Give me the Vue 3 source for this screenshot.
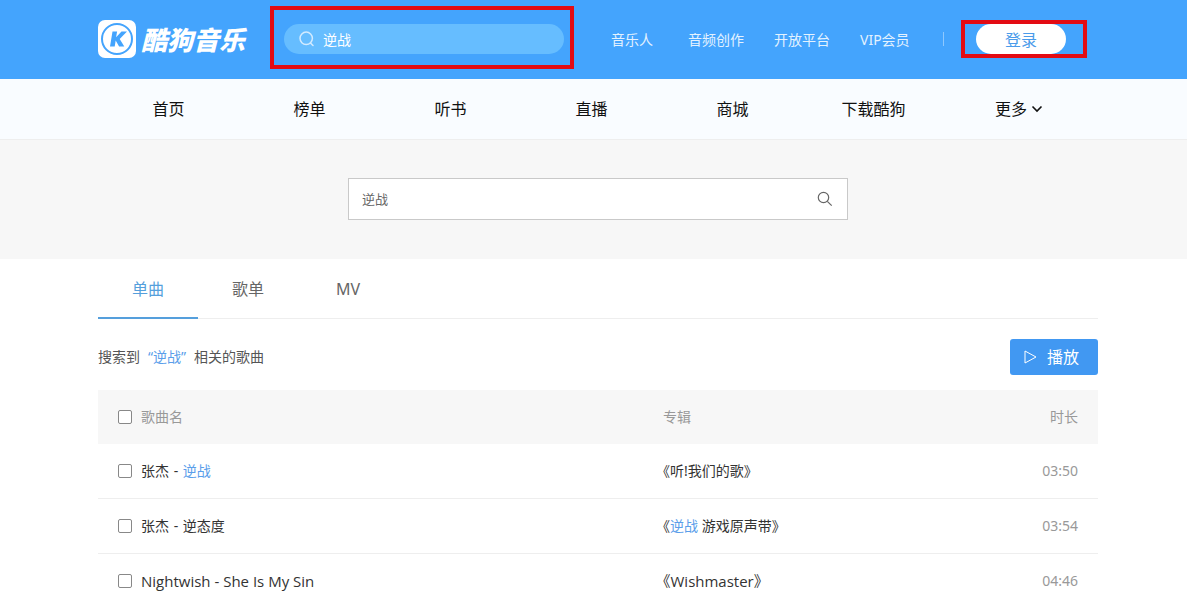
<script setup>
import { ref } from 'vue'

const topQuery = ref('逆战')
const query = ref('逆战')
const topLinks = ['音乐人', '音频创作', '开放平台', 'VIP会员']
const navLinks = ['首页', '榜单', '听书', '直播', '商城', '下载酷狗']
const tabs = ['单曲', '歌单', 'MV']
const activeTab = ref('单曲')
const songs = [
  { id: 1, artist: '张杰', title: '逆战', hit: true, album: [{ t: '《听!我们的歌》' }], time: '03:50' },
  { id: 2, artist: '张杰', title: '逆态度', album: [{ t: '《' }, { t: '逆战', hit: true }, { t: ' 游戏原声带》' }], time: '03:54' },
  { id: 3, artist: 'Nightwish', title: 'She Is My Sin', latin: true, album: [{ t: '《Wishmaster》' }], time: '04:46' }
]
</script>

<template>
  <div class="page">
    <header class="top">
      <div class="wrap top-inner">
        <a class="logo" href="#" aria-label="酷狗音乐">
          <svg class="logo-mark" viewBox="0 0 38 38" aria-hidden="true">
            <rect width="38" height="38" rx="7" fill="#fff" />
            <circle cx="19" cy="19" r="15" fill="none" stroke="#44a4fd" stroke-width="2" />
            <path d="M14.500 11.500h4.600l-1 5.700 5.400-5.700h5.500l-7.300 7.500 4.600 7.500h-5.200l-3.400-6-1 6h-4.700z" fill="#44a4fd" />
          </svg>
          <span class="logo-text">酷狗音乐</span>
        </a>
        <form class="top-search" role="search" @submit.prevent>
          <button class="icon-btn" type="submit" aria-label="搜索">
            <svg width="16" height="16" viewBox="0 0 16 16" fill="none" stroke="#d3ebff" stroke-width="1.500" aria-hidden="true">
              <circle cx="7.200" cy="7.300" r="6.200" />
              <path d="M11.500 12l2.500 2.500" stroke-linecap="round" />
            </svg>
          </button>
          <input v-model="topQuery" class="top-input" type="text" aria-label="搜索音乐" />
          <span class="mark mark-search"></span>
        </form>
        <nav class="top-links" aria-label="服务">
          <a v-for="l in topLinks" :key="l" href="#">{{ l }}</a>
        </nav>
        <span class="divider"></span>
        <div class="login-box">
          <button class="login" type="button">登录</button>
          <span class="mark mark-login"></span>
        </div>
      </div>
    </header>

    <nav class="main-nav" aria-label="主导航">
      <div class="wrap nav-grid">
        <a v-for="l in navLinks" :key="l" href="#">{{ l }}</a>
        <a class="more" href="#">更多<svg width="12" height="8" viewBox="0 0 12 8" fill="none" stroke="#111" stroke-width="1.600" aria-hidden="true"><path d="M1.500 1.500L6 6l4.500-4.500" /></svg></a>
      </div>
    </nav>

    <section class="band">
      <form class="search" role="search" @submit.prevent>
        <input v-model="query" class="search-input" type="text" aria-label="搜索歌曲" />
        <button class="icon-btn" type="submit" aria-label="搜索歌曲">
          <svg width="16" height="16" viewBox="0 0 16 16" fill="none" stroke="#666" stroke-width="1.200" aria-hidden="true">
            <circle cx="6.500" cy="6.500" r="5.200" />
            <path d="M10.300 10.300l4.400 4.400" />
          </svg>
        </button>
      </form>
    </section>

    <main class="wrap">
      <div class="tabs" role="tablist">
        <button v-for="t in tabs" :key="t" class="tab" :class="{ active: t === activeTab }" type="button" role="tab" :aria-selected="t === activeTab" @click="activeTab = t">{{ t }}</button>
      </div>
      <div class="summary">
        <p>搜索到<span class="hit quoted">“逆战”</span>相关的歌曲</p>
        <button class="play" type="button">
          <svg width="13" height="14" viewBox="0 0 13 14" fill="none" stroke="#fff" stroke-width="1" aria-hidden="true"><path d="M1 1l11 6-11 6z" /></svg>
          播放
        </button>
      </div>
      <table class="songs">
        <thead>
          <tr>
            <th class="c-name"><label><input type="checkbox" /><span>歌曲名</span></label></th>
            <th class="c-album">专辑</th>
            <th class="c-time">时长</th>
          </tr>
        </thead>
        <tbody>
          <tr v-for="s in songs" :key="s.id" :class="{ latin: s.latin }">
            <td class="c-name"><label><input type="checkbox" /><span>{{ s.artist }}<span class="sep"> - </span><span :class="{ hit: s.hit }">{{ s.title }}</span></span></label></td>
            <td class="c-album"><span v-for="(p, i) in s.album" :key="i" :class="{ hit: p.hit }">{{ p.t }}</span></td>
            <td class="c-time">{{ s.time }}</td>
          </tr>
        </tbody>
      </table>
    </main>
  </div>
</template>

<style>
body { margin: 0; background: #fff; }
</style>

<style scoped>
* { box-sizing: border-box; }
.page {
  font-family: "Noto Sans", "Noto Sans CJK SC", sans-serif;
  font-size: 14px;
  line-height: 20px;
  color: #333;
}
a { color: inherit; text-decoration: none; }
button, input { font: inherit; color: inherit; }
button { border: 0; padding: 0; background: none; cursor: pointer; }
svg { display: block; flex: none; }
.top, .main-nav, .band, main { padding-left: 9px; }
.wrap { max-width: 1000px; margin: 0 auto; }
main.wrap { max-width: 1009px; }

.top { background: #44a4fd; padding-bottom: 1px; }
.top-inner { display: flex; align-items: center; height: 78px; }
.logo { display: flex; align-items: center; gap: 5px; width: 186px; }
.logo-mark { width: 38px; height: 38px; }
.logo-text { font-size: 26px; line-height: 36px; font-family: "Noto Sans CJK SC", sans-serif; font-weight: 900; font-style: italic; color: #fff; white-space: nowrap; }
.top-search { position: relative; display: flex; align-items: center; gap: 8px; width: 280px; height: 30px; padding: 0 16px 0 15px; border-radius: 15px; background: #66bdff; color: #fff; }
.top-input { flex: 1; min-width: 0; height: 30px; padding: 0; border: 0; outline: 0; background: none; }
.mark { position: absolute; border: 4px solid #e30b13; pointer-events: none; }
.mark-search { inset: -18px -10px -15px -14px; }
.mark-login { inset: -4px -21px -4px -15px; }
.top-links { display: flex; gap: 30px; margin-left: 47px; padding-top: 2px; color: #e3f2ff; white-space: nowrap; }
.top-links a:first-child { margin-right: 5px; }
.divider { width: 1px; height: 14px; margin: 0 32px 0 auto; background: #8ec8fe; }
.login-box { position: relative; margin-right: 32px; }
.login { display: block; width: 90px; height: 30px; padding-top: 2px; border-radius: 15px; background: #fff; color: #4a9bea; font-size: 16px; }

.main-nav { background: #f9fcff; border-bottom: 1px solid #eee; }
.nav-grid { display: grid; grid-template-columns: repeat(6, 141px) 1fr; color: #111; font-size: 16px; line-height: 60px; text-align: center; }
.more { display: flex; align-items: center; justify-content: center; gap: 4px; padding-right: 4px; }

.band { background: #f7f7f7; padding-top: 38px; padding-bottom: 39px; }
.search { display: flex; align-items: center; max-width: 500px; height: 42px; margin: 0 auto; padding: 0 14px 0 13px; border: 1px solid #c9c9c9; background: #fff; }
.search-input { flex: 1; min-width: 0; padding: 0; border: 0; outline: 0; background: none; color: #666; font-size: 13px; }

.tabs { display: flex; border-bottom: 1px solid #eee; }
.tab { width: 100px; height: 60px; margin-bottom: -1px; padding-top: 2px; border-bottom: 2px solid transparent; color: #666; font-size: 16px; }
.tab.active { color: #559fdc; border-bottom-color: #559fdc; }
.hit { color: #5a9eea; }
.summary { display: flex; align-items: center; justify-content: space-between; padding: 20px 0 15px; color: #555; }
.summary p { margin: 0; }
.quoted { margin: 0 8px; }
.play { display: flex; align-items: center; gap: 10px; width: 88px; height: 36px; padding-left: 14px; border-radius: 3px; background: #4198f2; color: #fff; font-size: 16px; }

.songs { width: 100%; border-collapse: separate; border-spacing: 0; table-layout: fixed; font-feature-settings: "halt"; }
.songs th, .songs td { height: 54px; padding: 0; font-weight: 400; text-align: left; }
.songs thead { background: #f7f7f7; color: #999; }
.songs td { height: 55px; border-bottom: 1px solid #eee; }
.songs .c-name { width: 565px; padding-left: 20px; }
.songs .c-time { width: 120px; padding-right: 20px; text-align: right; color: #999; }
.songs label { display: flex; align-items: center; gap: 9px; white-space: pre; }
.songs input { appearance: none; flex: none; width: 14px; height: 14px; margin: 0; border: 1px solid #888; border-radius: 2px; background: #fff; }
.songs input:checked { background: #4198f2; }
.sep { margin: 0 1px; }
.latin .sep { margin: 0; }
.latin .c-name, .latin .c-album { font-family: "Open Sans", "Noto Sans CJK SC", sans-serif; font-size: 15px; }
</style>
